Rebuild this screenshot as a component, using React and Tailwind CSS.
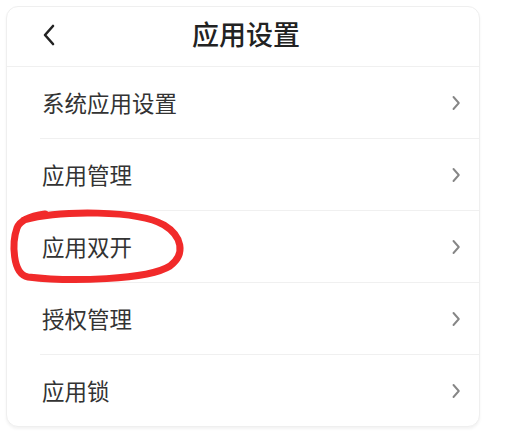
import React from "react";

const items = ["系统应用设置", "应用管理", "应用双开", "授权管理", "应用锁"];

function Chevron() {
  return (
    <svg width="10" height="16" viewBox="0 0 10 16" fill="none">
      <path d="M2.5 2 L7.8 8 L2.5 14" stroke="#868686" strokeWidth="1.9" strokeLinecap="round" strokeLinejoin="round" />
    </svg>
  );
}

export default function App() {
  return (
    <div
      className="relative w-[511px] h-[433px] bg-white overflow-hidden"
      style={{ fontFamily: '"Noto Sans CJK SC", "Noto Sans", sans-serif' }}
    >
      <div className="ml-[6px] mt-[6px] w-[474px] h-[421px] rounded-[12px] border border-[#efefef] bg-white shadow-[0_2px_3px_rgba(0,0,0,0.05)] flex flex-col">
        <div className="relative h-[60px] flex items-center justify-center border-b border-[#f0f0f0]">
          <div className="absolute left-[34px] top-[16px]">
            <svg width="16" height="24" viewBox="0 0 16 24" fill="none">
              <path d="M12 3 L4 12 L12 21" stroke="#222" strokeWidth="2.6" strokeLinecap="round" strokeLinejoin="round" />
            </svg>
          </div>
          <span className="ml-[6px] text-[27px] font-medium text-[#222] mt-[-4px]">应用设置</span>
        </div>
        <div className="flex flex-col">
          {items.map((t, i) => (
            <div key={t} className="flex flex-col">
              <div className="h-[71px] flex items-center justify-between pl-[35px] pr-[18px]">
                <span className="text-[22.5px] text-[#333] leading-none">{t}</span>
                <Chevron />
              </div>
              {i < items.length - 1 && <div className="ml-[33px] h-px bg-[#f0f0f0]" />}
            </div>
          ))}
        </div>
      </div>
      <svg className="absolute left-0 top-[200px]" width="200" height="95" viewBox="0 0 200 95" fill="none">
        <path
          d="M24 20 C 60 10, 138 10, 164 25 C 182 36, 186 54, 170 66 C 148 80, 70 82, 28 77 C 12 74, 12 42, 17 28 C 20 20, 30 16, 45 14"
          stroke="#f12a2a"
          strokeWidth="7"
          strokeLinecap="round"
          strokeLinejoin="round"
        />
      </svg>
    </div>
  );
}
